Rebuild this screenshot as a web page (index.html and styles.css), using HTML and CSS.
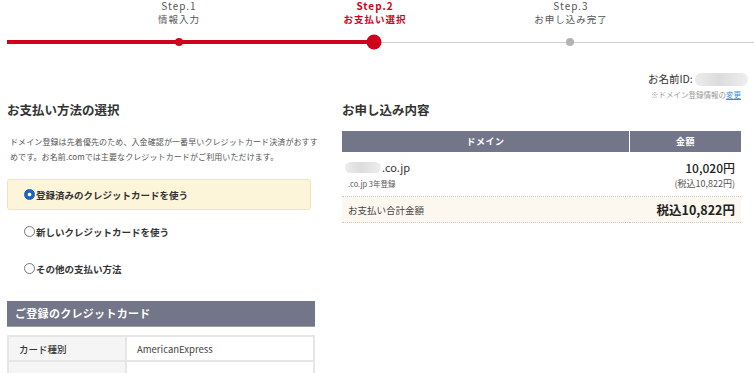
FILE: index.html
```html
<!DOCTYPE html>
<html lang="ja">
<head>
  <meta charset="UTF-8">
  <title>お支払い方法の選択</title>
  <link rel="stylesheet" href="styles.css">
</head>
<body>
<div class="stepper">
  <div class="steps">
    <div class="step">
      <div class="step-no">Step.1</div>
      <div class="step-name">情報入力</div>
    </div>
    <div class="step current">
      <div class="step-no">Step.2</div>
      <div class="step-name">お支払い選択</div>
    </div>
    <div class="step">
      <div class="step-no">Step.3</div>
      <div class="step-name">お申し込み完了</div>
    </div>
  </div>
  <div class="track">
    <div class="track-done"></div>
    <div class="track-rest"></div>
    <span class="dot dot-1"></span>
    <span class="dot dot-2"></span>
    <span class="dot dot-3"></span>
  </div>
</div>

<div class="main">
  <div class="col-left">
    <h2 class="title">お支払い方法の選択</h2>
    <p class="lead">ドメイン登録は先着優先のため、入金確認が一番早いクレジットカード決済がおすす<br>めです。お名前.comでは主要なクレジットカードがご利用いただけます。</p>

    <div class="options">
      <div class="option selected"><span class="radio on"></span>登録済みのクレジットカードを使う</div>
      <div class="option"><span class="radio"></span>新しいクレジットカードを使う</div>
      <div class="option"><span class="radio"></span>その他の支払い方法</div>
    </div>

    <div class="card-head">ご登録のクレジットカード</div>
    <table class="card-table">
      <tr><th>カード種別</th><td>AmericanExpress</td></tr>
      <tr><th>&nbsp;</th><td>&nbsp;</td></tr>
    </table>
  </div>

  <div class="col-right">
    <div class="account">
      <div class="account-id">お名前ID: <span class="blur blur-id"></span></div>
      <div class="account-note">※ドメイン登録情報の<a href="#">変更</a></div>
    </div>
    <h2 class="title">お申し込み内容</h2>
    <table class="order">
      <tr class="order-head"><th>ドメイン</th><th class="col-price">金額</th></tr>
      <tr class="order-item">
        <td>
          <div class="domain"><span class="blur blur-domain"></span>.co.jp</div>
          <div class="domain-sub">.co.jp 3年登録</div>
        </td>
        <td class="price">
          <div class="price-main">10,020円</div>
          <div class="price-tax">(税込10,822円)</div>
        </td>
      </tr>
      <tr class="order-total">
        <td>お支払い合計金額</td>
        <td class="total">税込10,822円</td>
      </tr>
    </table>
  </div>
</div>
</body>
</html>
```

FILE: styles.css
```css
body {
  margin: 0;
  background: #fff;
  font-family: "Noto Sans CJK JP", "Liberation Sans", sans-serif;
  color: #333;
  width: 754px;
  overflow: hidden;
}

/* progress */
.steps {
  display: flex;
  padding-left: 81px;
}

.step {
  width: 196px;
  text-align: center;
  color: #555;
}

.step-no {
  font-size: 10px;
  line-height: 11px;
  letter-spacing: 1px;
}

.step-name {
  font-size: 9.5px;
  line-height: 12px;
  margin-top: 2px;
  letter-spacing: 1px;
}

.step.current {
  color: #d0021b;
  font-weight: bold;
}

.track {
  position: relative;
  display: flex;
  align-items: center;
  height: 16px;
  margin-top: 9px;
  padding-left: 7px;
}

.track-done {
  width: 367px;
  height: 4px;
  background: #d0021b;
}

.track-rest {
  flex: 1;
  height: 1px;
  background: #cfcfcf;
}

.dot {
  position: absolute;
  top: 50%;
  width: 8px;
  height: 8px;
  border-radius: 50%;
  transform: translate(-50%, -50%);
}

.dot-1 { left: 179px; background: #d0021b; }
.dot-2 { left: 374px; width: 15px; height: 15px; background: #d0021b; }
.dot-3 { left: 570px; background: #b3b3b3; }

/* layout */
.main {
  display: flex;
  gap: 27px;
  padding-left: 7px;
  margin-top: 21px;
}

.col-left {
  width: 308px;
  padding-top: 30px;
}

.col-right {
  width: 399px;
}

.title {
  margin: 0;
  font-size: 12.5px;
  line-height: 18px;
  font-weight: bold;
  color: #333;
}

.lead {
  margin: 15px 0 0 3px;
  font-size: 8px;
  line-height: 15px;
  letter-spacing: .1px;
  white-space: nowrap;
  color: #555;
}

/* options */
.options {
  display: flex;
  flex-direction: column;
  gap: 6px;
  margin-top: 15px;
  width: 304px;
}

.option {
  display: flex;
  align-items: center;
  height: 31px;
  padding-left: 16px;
  font-size: 9.5px;
  font-weight: bold;
  color: #333;
  border: 1px solid transparent;
  border-radius: 3px;
  box-sizing: border-box;
}

.option.selected {
  background: #fdf5d9;
  border-color: #f1e4b8;
}

.radio {
  width: 9px;
  height: 9px;
  border: 1px solid #777;
  border-radius: 50%;
  background: #fff;
  box-sizing: content-box;
  margin-right: 1px;
  flex-shrink: 0;
}

.radio.on {
  background: radial-gradient(circle, #fff 0 1.6px, #1c64c8 2.2px);
  border-color: #1a5cb8;
}

/* credit card */
.card-head {
  margin-top: 17px;
  height: 25px;
  line-height: 25px;
  padding-left: 8px;
  background: #737588;
  border-bottom: 1px solid #9a9bab;
  color: #fff;
  font-size: 11px;
  font-weight: bold;
  letter-spacing: .3px;
}

.card-table {
  margin-top: 8px;
  width: 100%;
  border-collapse: collapse;
  font-size: 9.5px;
}

.card-table th,
.card-table td {
  border: 2px solid #e6e6e6;
  height: 23px;
  padding: 0 10px;
  text-align: left;
}

.card-table th {
  width: 96px;
  background: #f5f5f5;
  font-weight: 500;
  color: #333;
}

.card-table td {
  color: #444;
}

/* account */
.account {
  text-align: right;
  margin-right: -7px;
  height: 30px;
}

.account-id {
  font-size: 10.5px;
  line-height: 16px;
  color: #333;
}

.account-note {
  margin-right: 7px;
  font-size: 7.5px;
  line-height: 12px;
  margin-top: 2px;
  color: #999;
}

.account-note a {
  color: #3b8bd9;
}

.blur {
  display: inline-block;
  border-radius: 6px;
  background: linear-gradient(90deg, #ececec, #dcdcdc 45%, #eeeeee);
  vertical-align: middle;
}

.blur-id {
  width: 53px;
  height: 13px;
  margin-top: -2px;
}

.blur-domain {
  width: 36px;
  height: 11px;
  margin-right: 1px;
  vertical-align: -1px;
}

/* order */
.order {
  margin-top: 12px;
  width: 100%;
  border-collapse: collapse;
}

.order-head th {
  background: #737588;
  color: #fff;
  font-size: 9px;
  font-weight: bold;
  height: 21px;
  padding: 0;
  letter-spacing: .5px;
}

.order-head th.col-price {
  width: 111px;
  border-left: 1px solid #fff;
}

.order-item td {
  padding: 8px 6px 0 6px;
  height: 36px;
  vertical-align: top;
  border-bottom: 1px dotted #c8c8c8;
}

.domain {
  font-size: 11px;
  line-height: 14px;
  color: #333;
  margin-left: -3px;
}

.domain-sub {
  margin-top: 4px;
  font-size: 7.5px;
  line-height: 12px;
  color: #555;
}

.price {
  text-align: right;
}

.price-main {
  font-size: 12px;
  line-height: 16px;
  font-weight: 500;
  color: #222;
}

.price-tax {
  margin-top: 2px;
  font-size: 9px;
  line-height: 12px;
  color: #555;
}

.order-total td {
  background: #fdf8ef;
  height: 25px;
  padding: 0 6px;
  border-bottom: 1px dotted #c8c8c8;
  font-size: 9.5px;
  color: #444;
}

.order-total .total {
  text-align: right;
  font-size: 12.5px;
  font-weight: bold;
  color: #222;
}
```
